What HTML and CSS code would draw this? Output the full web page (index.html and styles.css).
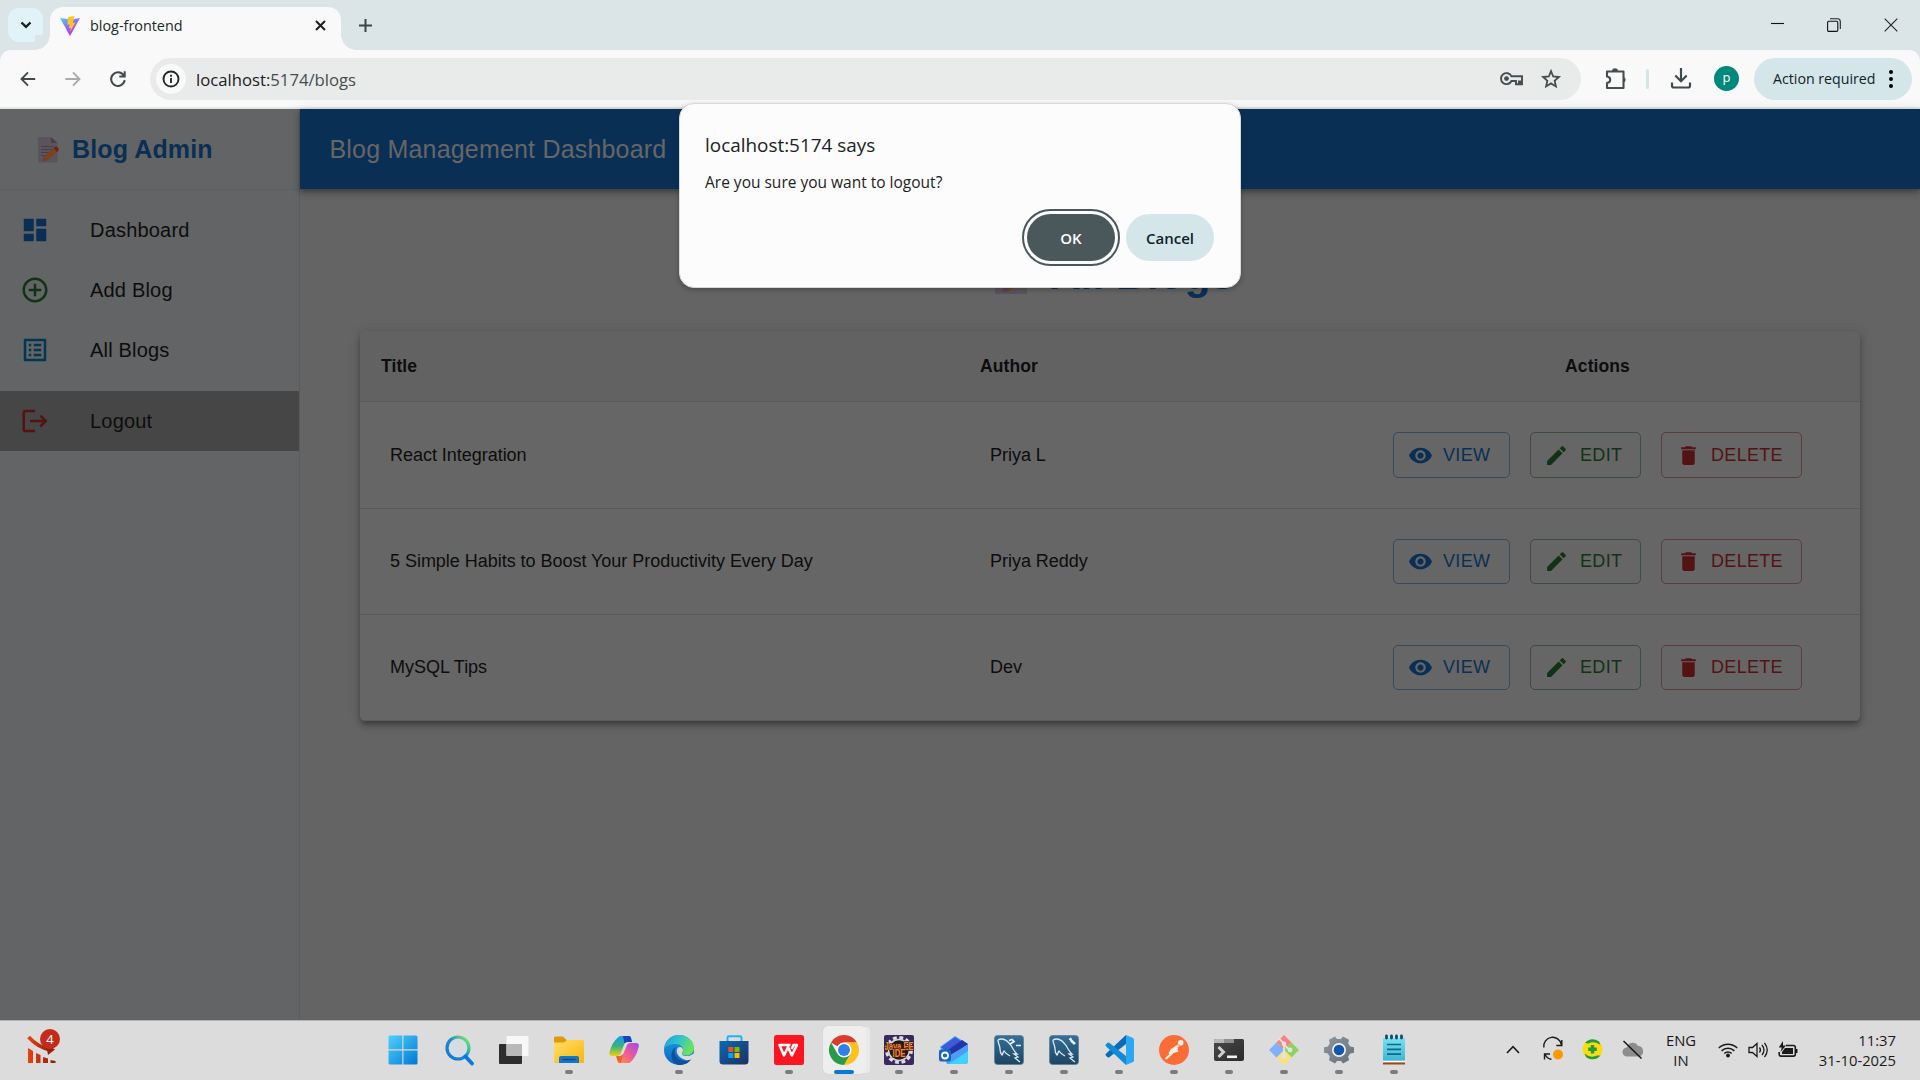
FILE: index.html
```html
<!DOCTYPE html>
<html lang="en">
<head>
<meta charset="utf-8">
<title>blog-frontend</title>
<link rel="stylesheet" href="styles.css">
</head>
<body>
<svg class="defs" width="0" height="0">
  <defs>
    <linearGradient id="gWin" x1="0" y1="0" x2="1" y2="1"><stop offset="0" stop-color="#4fd0fd"/><stop offset="1" stop-color="#0078d4"/></linearGradient>
    <linearGradient id="gSearch" x1="1" y1="0" x2="0" y2="1"><stop offset=".1" stop-color="#6be36a"/><stop offset=".5" stop-color="#1b87d6"/><stop offset="1" stop-color="#0a78d8"/></linearGradient>
    <linearGradient id="gFolder" x1="0" y1="0" x2="1" y2="1"><stop offset="0" stop-color="#ffe06a"/><stop offset="1" stop-color="#fbb40c"/></linearGradient>
    <linearGradient id="gCopA" x1="0" y1="0" x2="0" y2="1"><stop offset="0" stop-color="#1a9bee"/><stop offset=".5" stop-color="#35b27e"/><stop offset="1" stop-color="#ecd010"/></linearGradient>
    <linearGradient id="gCopB" x1="1" y1="0" x2="0" y2="1"><stop offset="0" stop-color="#9a4df0"/><stop offset=".5" stop-color="#f0589a"/><stop offset="1" stop-color="#ff9a3c"/></linearGradient>
    <linearGradient id="gEdgeA" x1="0" y1="0" x2="1" y2=".4"><stop offset="0" stop-color="#1b9de2"/><stop offset=".5" stop-color="#2fc3cf"/><stop offset="1" stop-color="#6be35a"/></linearGradient>
    <linearGradient id="gEdgeB" x1="0" y1="0" x2="0" y2="1"><stop offset="0" stop-color="#1ba0e6"/><stop offset="1" stop-color="#0b66c0"/></linearGradient>
    <linearGradient id="gStore" x1="0" y1="0" x2="1" y2="1"><stop offset="0" stop-color="#0a6ab6"/><stop offset="1" stop-color="#1e2e5e"/></linearGradient>
    <linearGradient id="gSql" x1="0" y1="0" x2="0" y2="1"><stop offset="0" stop-color="#33709a"/><stop offset="1" stop-color="#1d4562"/></linearGradient>
    <linearGradient id="gVite" x1="0" y1="0" x2=".6" y2="1"><stop offset="0" stop-color="#41d1ff"/><stop offset=".7" stop-color="#a04dfd"/><stop offset="1" stop-color="#bd34fe"/></linearGradient>
    <linearGradient id="gNote" x1="0" y1="0" x2="0" y2="1"><stop offset="0" stop-color="#7be0f0"/><stop offset="1" stop-color="#3fb6d6"/></linearGradient>
    <linearGradient id="gGear" x1="0" y1="0" x2="1" y2="1"><stop offset="0" stop-color="#8e979f"/><stop offset="1" stop-color="#66707a"/></linearGradient>
    <linearGradient id="gTerm" x1="0" y1="0" x2="1" y2="1"><stop offset="0" stop-color="#4a4a4a"/><stop offset="1" stop-color="#2a2a2a"/></linearGradient>
    <linearGradient id="gStock" x1="0" y1="0" x2="1" y2="0"><stop offset="0" stop-color="#e8420c"/><stop offset="1" stop-color="#8f1d0c"/></linearGradient>
    <symbol id="memo" viewBox="0 0 22 26">
      <path d="M0 0h13l6.500 6v19.500H0z" fill="#5b545e"/><path d="M13 0v6h6.500z" fill="#474049"/>
      <path d="M3 9.500h12M3 12.500h12M3 15.500h9M3 18.500h6" stroke="#443d4b" stroke-width="1"/>
      <path d="M5.500 19.500 15.500 11l3.500 4-10 8.500-4.500 1z" fill="#7a4319"/><path d="M5.500 19.500l3.500 4-4.500 1z" fill="#5a4550"/>
      <path d="M15.500 11l1.300-1.200q1.800-.8 3.200 1 1.400 1.600.3 3L19 15z" fill="#6a2419"/>
    </symbol>
    <symbol id="eye" viewBox="0 0 24 24"><path d="M12 4.500C7 4.500 2.730 7.610 1 12c1.730 4.390 6 7.500 11 7.500s9.270-3.110 11-7.500c-1.730-4.390-6-7.500-11-7.500zM12 17c-2.760 0-5-2.240-5-5s2.240-5 5-5 5 2.240 5 5-2.240 5-5 5zm0-8c-1.660 0-3 1.340-3 3s1.340 3 3 3 3-1.340 3-3-1.340-3-3-3z"/></symbol>
    <symbol id="pencil" viewBox="0 0 24 24"><path d="M3 17.250V21h3.750L17.810 9.940l-3.750-3.750L3 17.250zM20.710 7.040c.39-.39.39-1.020 0-1.410l-2.340-2.340a.996.996 0 0 0-1.410 0l-1.830 1.830 3.750 3.750 1.830-1.830z"/></symbol>
    <symbol id="bin" viewBox="0 0 24 24"><path d="M6 19c0 1.100.9 2 2 2h8c1.100 0 2-.9 2-2V7H6v12zM19 4h-3.500l-1-1h-5l-1 1H5v2h14V4z"/></symbol>
    <symbol id="dolphin" viewBox="0 0 30 30"><path d="M4 5c3-2 8-1 11 3 4 4 4 8 8 11l-3 0 4 3-3 1 5 4M4 5c0 4 2 5 2 9 0 3 1 5 2 6 1-1 1-3 2-4 2 3 4 4 6 5" fill="none" stroke="#dce9f2" stroke-width="1.300"/></symbol>
  </defs>
</svg>

<div class="screen">
  <header class="tabstrip">
    <div class="tab-search"><svg width="12" height="8" viewBox="0 0 12 8"><path d="M1.500 1.500 6 5.800l4.500-4.300" fill="none" stroke="#1b2021" stroke-width="2.400"/></svg></div>
    <div class="tab">
      <svg width="20" height="20" viewBox="0 0 20 20"><path d="M0 2l10 18L20 2l-9 1.600z" fill="url(#gVite)"/><path d="M14.500 0 8 1.300l-.8 7.400 2.400-.4-.8 4 2-.6-.8 4.300 5.500-9.500-2.600.5z" fill="#ffc41f"/></svg>
      <span class="tab-title">blog-frontend</span>
      <svg width="11" height="11" viewBox="0 0 11 11"><path d="M1 1l9 9M10 1l-9 9" stroke="#1b1f20" stroke-width="2"/></svg>
    </div>
    <svg class="new-tab" width="13" height="13" viewBox="0 0 13 13"><path d="M6.500 0v13M0 6.500h13" stroke="#3a4547" stroke-width="2"/></svg>
    <div class="window-controls">
      <svg width="14" height="14" viewBox="0 0 14 14"><path d="M1 5.500h13" stroke="#111" stroke-width="1.100"/></svg>
      <svg width="14" height="14" viewBox="0 0 14 14"><rect x=".6" y="3.200" width="10.200" height="10.200" rx="1.200" fill="none" stroke="#111" stroke-width="1.100"/><path d="M3 .8h7.500q2.800 0 2.800 2.800V11" fill="none" stroke="#222" stroke-width="1.100"/></svg>
      <svg width="14" height="14" viewBox="0 0 14 14"><path d="M.7.700l12.600 12.600M13.300.7.700 13.300" stroke="#222" stroke-width="1.100"/></svg>
    </div>
  </header>

  <div class="toolbar-back">
  <nav class="toolbar">
    <div class="nav-buttons">
      <svg width="16" height="16" viewBox="0 0 16 16"><path d="M15.200 8H2M8 1.400 1.500 8 8 14.600" fill="none" stroke="#3f4a4c" stroke-width="1.900"/></svg>
      <svg width="16" height="16" viewBox="0 0 16 16"><path d="M.3 8H14M8 1.400 14.500 8 8 14.600" fill="none" stroke="#a8acad" stroke-width="1.900"/></svg>
      <svg width="16" height="16" viewBox="0 0 16 16"><path d="M13.600 4.300A6.800 6.800 0 1 0 14.700 9.200M14.700.3v5.200H9.300" fill="none" stroke="#3f4a4c" stroke-width="2"/></svg>
    </div>
    <div class="omnibox">
      <div class="site-info"><svg width="18" height="18" viewBox="0 0 18 18"><circle cx="9" cy="9" r="7.500" fill="none" stroke="#232829" stroke-width="1.900"/><path d="M9 8v5M9 4.800v1.900" stroke="#232829" stroke-width="1.900"/></svg></div>
      <div class="url"><b>localhost:</b>5174/blogs</div>
      <svg class="key" width="23" height="14" viewBox="0 0 23 14"><path d="M11.500 4.300A5.500 5.500 0 1 0 11.500 9H16v3.300h3V9.500h1.500v2.800H22V4.300z" fill="none" stroke="#454e50" stroke-width="1.900"/><circle cx="6.500" cy="6.600" r="2.400" fill="#454e50"/></svg>
      <svg class="star" width="20" height="20" viewBox="0 0 20 20"><path d="M10 2.200l2.200 5.300 5.700.5-4.300 3.800 1.300 5.600-4.900-3-4.900 3 1.300-5.600L2.100 8l5.700-.5z" fill="none" stroke="#454e50" stroke-width="1.800"/></svg>
    </div>
    <svg class="puzzle" width="22" height="22" viewBox="0 0 22 22"><path d="M2 3.500h16.500v16.500H2v-5q3.200-.5 3.200-3.300T2 8.500z" fill="none" stroke="#454e50" stroke-width="2.100" stroke-linejoin="round"/><path d="M7 3.300a3 3 0 0 1 6 0zM18.700 9a3 3 0 0 1 0 5.600z" fill="#454e50"/></svg>
    <div class="separator"></div>
    <svg class="download" width="20" height="21" viewBox="0 0 20 21"><path d="M10 0v12.500M4.300 7.500l5.700 5.700 5.700-5.700M1 14.500v3.300q0 1.700 1.700 1.700h14.600q1.700 0 1.700-1.700v-3.300" fill="none" stroke="#3f4a4c" stroke-width="2.200"/></svg>
    <div class="avatar">p</div>
    <div class="action-pill"><span>Action required</span><svg width="4" height="18" viewBox="0 0 4 18"><circle cx="2" cy="2" r="2"/><circle cx="2" cy="9" r="2"/><circle cx="2" cy="16" r="2"/></svg></div>
  </nav>
  </div>

  <div class="page">
    <aside class="sidebar">
      <div class="brand"><svg width="22" height="26"><use href="#memo"/></svg><span>Blog Admin</span></div>
      <ul class="menu">
        <li><svg class="blue" width="30" height="30" viewBox="0 0 24 24"><path d="M3 13h8V3H3v10zm0 8h8v-6H3v6zm10 0h8V11h-8v10zm0-18v6h8V3h-8z"/></svg>Dashboard</li>
        <li><svg class="green" width="30" height="30" viewBox="0 0 24 24"><path d="M13 7h-2v4H7v2h4v4h2v-4h4v-2h-4V7zm-1-5C6.480 2 2 6.480 2 12s4.480 10 10 10 10-4.480 10-10S17.520 2 12 2zm0 18c-4.410 0-8-3.590-8-8s3.590-8 8-8 8 3.590 8 8-3.590 8-8 8z"/></svg>Add Blog</li>
        <li><svg class="info" width="30" height="30" viewBox="0 0 24 24"><path d="M19 5v14H5V5h14m1.100-2H3.900c-.5 0-.9.4-.9.9v16.200c0 .4.4.9.9.9h16.200c.4 0 .9-.5.9-.9V3.900c0-.5-.5-.9-.9-.9zM11 7h6v2h-6V7zm0 4h6v2h-6v-2zm0 4h6v2h-6zM7 7h2v2H7zm0 4h2v2H7zm0 4h2v2H7z"/></svg>All Blogs</li>
        <li class="logout"><svg class="red" width="30" height="30" viewBox="0 0 24 24"><path d="m17 7-1.410 1.410L18.170 11H8v2h10.170l-2.580 2.580L17 17l5-5zM4 5h8V3H4c-1.100 0-2 .9-2 2v14c0 1.100.9 2 2 2h8v-2H4V5z"/></svg>Logout</li>
      </ul>
    </aside>
    <main class="main">
      <div class="appbar">Blog Management Dashboard</div>
      <div class="content">
        <h1 class="heading"><svg width="36" height="43"><use href="#memo"/></svg><span>All Blogs</span></h1>
        <div class="paper">
          <div class="thead"><span>Title</span><span>Author</span><span>Actions</span></div>
          <div class="trow first"><span>React Integration</span><span>Priya L</span>
            <div class="actions"><div class="btn view"><svg><use href="#eye"/></svg>VIEW</div><div class="btn edit"><svg><use href="#pencil"/></svg>EDIT</div><div class="btn delete"><svg><use href="#bin"/></svg>DELETE</div></div></div>
          <div class="trow"><span>5 Simple Habits to Boost Your Productivity Every Day</span><span>Priya Reddy</span>
            <div class="actions"><div class="btn view"><svg><use href="#eye"/></svg>VIEW</div><div class="btn edit"><svg><use href="#pencil"/></svg>EDIT</div><div class="btn delete"><svg><use href="#bin"/></svg>DELETE</div></div></div>
          <div class="trow"><span>MySQL Tips</span><span>Dev</span>
            <div class="actions"><div class="btn view"><svg><use href="#eye"/></svg>VIEW</div><div class="btn edit"><svg><use href="#pencil"/></svg>EDIT</div><div class="btn delete"><svg><use href="#bin"/></svg>DELETE</div></div></div>
        </div>
      </div>
    </main>
  </div>

  <footer class="taskbar">
    <div class="widgets">
      <svg width="30" height="30" viewBox="0 0 30 30"><path d="M1.500 3q9 10 22 13" fill="none" stroke="url(#gStock)" stroke-width="3.600"/><path d="M19 10l9 5.500-7 5.500z" fill="#9a200c"/><path d="M1 14l5 3v12H1zM9 19l4.500 2v8H9zM16 23l5 1.500V29h-5zM23.500 26l5 1v2h-5z" fill="url(#gStock)"/></svg>
      <span class="badge">4</span>
    </div>
    <div class="apps">
      <div class="app start"><svg viewBox="0 0 30 30"><path d="M.5 2q0-1.500 1.500-1.500h12.300v13.800H.500zM15.400.500h12.600q1.500 0 1.500 1.500v12.300H15.400zM.5 15.400h13.800v14H2q-1.500 0-1.500-1.500zM15.400 15.400h14.100v12.500q0 1.500-1.500 1.500H15.400z" fill="url(#gWin)"/></svg></div>
      <div class="app"><svg viewBox="0 0 30 30"><circle cx="14" cy="13" r="11" fill="#d5dde3" stroke="url(#gSearch)" stroke-width="3.200"/><path d="M21.500 21.500l6.500 7" stroke="#0a78d8" stroke-width="3.800" stroke-linecap="round"/></svg></div>
      <div class="app"><svg viewBox="0 0 30 30"><rect x="0" y="9" width="23" height="20" rx="1" fill="#2d2d2d"/><rect x="7.500" y="1" width="22" height="20" rx="1" fill="#f8f8f8"/><rect x="7.500" y="9" width="15.500" height="12" fill="#b9b9b9"/></svg></div>
      <div class="app run"><svg viewBox="0 0 30 30"><path d="M0 3q0-1.500 1.500-1.500H9L12.500 5H27v6H0z" fill="#dd9a0a"/><path d="M0 7.500h10L13 5h15.500q1.500 0 1.500 1.500V28H0z" fill="url(#gFolder)"/><path d="M5 28v-5q0-2 2-2h16q2 0 2 2v5z" fill="#1376c8"/><path d="M8.500 24.500h13" stroke="#0a4a80" stroke-width="1.300"/></svg></div>
      <div class="app"><svg viewBox="0 0 30 30"><path d="M9 2.500Q9.500 1 12 1h8q1.500 0 2 2l1 4h-5q-2 0-2.700 2l-3.800 10q-.8 2-3 2H3q-3 0-2.500-3.500Q3 7 9 2.500z" fill="url(#gCopA)"/><path d="M14 1h6q1.500 0 2 2l1 4h-5q-1.500 0-2.500 1.500z" fill="#1642c4"/><path d="M21 27.500Q20.500 28 18 28h-7q-2 0-2.500-2L7.300 21.500H11q2.500 0 3.200-2.500L18 10q.8-2 3-2h6q3.400 0 2.800 3.500Q27 23 21 27.500z" fill="url(#gCopB)"/><path d="M7.300 21h4l2.700-2-2 8.800h-1q-2 0-2.500-2z" fill="#f4602c"/></svg></div>
      <div class="app run"><svg viewBox="0 0 30 30"><circle cx="15" cy="15" r="15" fill="url(#gEdgeB)"/><path d="M0 14C1 5 7 0 15 0c9 0 15 6 15 13 0 5-4 7.500-8 7.500-3 0-4.500-1.500-3.500-3 2-4-1-8.500-6.500-8.500C6 9 1.500 11 0 14z" fill="url(#gEdgeA)"/><path d="M12 12c-4 6 1 14 9 14 3 0 5-1 6.500-2-3 4.500-7.500 6-12.500 6C6 28 5 16 12 12z" fill="#0f4f9c"/><path d="M14 12.500q3.500-1.500 4.800 1.500.7 2-.6 4c-.7 1.500.6 3 4.300 3q4 0 7-2.500l.3.600q-.5 3-1.500 4.400-2 2-6 1.700C14.500 23 10.500 17 14 12.500z" fill="#dcdcdc"/></svg></div>
      <div class="app"><svg viewBox="0 0 30 30"><path d="M8.500 7V2.500Q8.500 1.300 10 1.300h11q1.500 0 1.500 1.200V7" fill="none" stroke="#1db4f2" stroke-width="2"/><path d="M.5 6h29v20q0 3.500-3.500 3.500H4Q.5 29.500.5 26z" fill="url(#gStore)"/><path d="M9.300 12h5v5h-5z" fill="#f25022"/><path d="M15.500 12h5v5h-5z" fill="#7fba00"/><path d="M9.300 18h5v5h-5z" fill="#00a4ef"/><path d="M15.500 18h5v5h-5z" fill="#ffb900"/></svg></div>
      <div class="app run"><svg viewBox="0 0 30 30"><rect width="30" height="30" rx="2.500" fill="#fb1521"/><path d="M16.500 10H5.500l4.500 10.500L14 12l3.800 8.500L23 10h-3.500l-1.800 4" fill="none" stroke="#fff" stroke-width="2.500" stroke-linejoin="round"/></svg></div>
      <div class="app run active"><svg viewBox="0 0 30 30"><path d="M15 15 2 7.500A15 15 0 0 1 28 7.500H15z" fill="#db3a2c"/><path d="M15 15V7.500h13A15 15 0 0 1 15 30l6.500-11z" fill="#fcc31e"/><path d="M15 15l6.500 3.700L15 30A15 15 0 0 1 2 7.500l6.500 11.200z" fill="#2a9a48"/><circle cx="15" cy="15" r="7.500" fill="#fff"/><circle cx="15" cy="15" r="6" fill="#2f80ea"/></svg></div>
      <div class="app run"><svg viewBox="0 0 30 30"><rect width="30" height="30" rx="2" fill="#3b2860"/><circle cx="15" cy="15" r="12.500" fill="none" stroke="#dedede" stroke-width="3" stroke-dasharray="3.900 2.640"/><circle cx="15" cy="15" r="10.500" fill="#1e1a20" stroke="#d4d4d4" stroke-width="1.600"/><text x="15" y="14.500" class="jee" textLength="29" lengthAdjust="spacingAndGlyphs">Java EE</text><text x="15" y="22.300" class="jee" textLength="13" lengthAdjust="spacingAndGlyphs">IDE</text></svg></div>
      <div class="app run"><svg viewBox="0 0 30 30"><path d="M1 12 16 1l13 8v17q0 3-3 3H8z" fill="#36b3f4"/><path d="M2 12 16 2l6 4-15 11z" fill="#3e5ad8"/><path d="M6 17 23 5l6 4-18 12z" fill="#2434a8"/><path d="M11 20 29 10v8L14 28z" fill="#4f9bf8"/><path d="M10 29l19-13v10q0 3-3 3z" fill="#3fd2fa"/><rect y="14.500" width="12" height="12" rx="2" fill="#1566c8"/><circle cx="6" cy="20.500" r="3" fill="none" stroke="#fff" stroke-width="1.800"/></svg></div>
      <div class="app run"><svg viewBox="0 0 30 30"><rect x=".5" y=".5" width="29" height="29" rx="3" fill="url(#gSql)" stroke="#5c7f97" stroke-width=".8"/><use href="#dolphin"/><path d="M15 5.500l3-1 2 2-4 2.500M22 10.500h5" stroke="#eef4f8" stroke-width="1.700" fill="none"/></svg></div>
      <div class="app run"><svg viewBox="0 0 30 30"><rect x=".5" y=".5" width="29" height="29" rx="3" fill="url(#gSql)" stroke="#5c7f97" stroke-width=".8"/><use href="#dolphin"/><path d="M20.500 3.500l2 1.500M22 5.500l4 3.500" stroke="#eef4f8" stroke-width="2.600" fill="none"/></svg></div>
      <div class="app run"><svg viewBox="0 0 30 30"><path d="M22 0 2.200 18.500q-1.600 1.300 0 2.600l1.400 1.100q.8.500 1.700 0L22 9z" fill="#0a6cb8"/><path d="M22 30 2.200 11.500q-1.600-1.300 0-2.600l1.400-1.100q.8-.5 1.700 0L22 21z" fill="#118bd8"/><path d="M22 0l7 3q1 .5 1 1.500v21q0 1-1 1.500l-7 3z" fill="#2aa8f6"/></svg></div>
      <div class="app run"><svg viewBox="0 0 30 30"><circle cx="15" cy="15" r="15" fill="#fb6c37"/><circle cx="21.700" cy="7.800" r="2.800" fill="#fdeee6"/><path d="M19.500 10.500 12.500 15l-2 4M18.500 12.500l-8 8-4 3.500M14 17l5-1.500" stroke="#fdeee6" stroke-width="2.200" fill="none"/></svg></div>
      <div class="app run"><svg viewBox="0 0 30 30"><path d="M0 5.500Q0 4 1.500 4h27Q30 4 30 5.500V24q0 2-2 2H2q-2 0-2-2z" fill="url(#gTerm)"/><path d="M0 8V5.500Q0 4 1.500 4H10v4z" fill="#b8b8b8"/><path d="M10 4h10v4H10z" fill="#8f8f8f"/><path d="M4.500 12l5 5-5 5" fill="none" stroke="#d0d0d0" stroke-width="3"/><path d="M13 21.800h10" stroke="#f2f2f2" stroke-width="2.600"/></svg></div>
      <div class="app run"><svg viewBox="0 0 30 30"><path d="M15 0l7.500 7.500L15 15 7.500 7.500z" fill="#fb7f7f"/><path d="M22.500 7.500 30 15l-7.500 7.500L15 15z" fill="#8bd55f"/><path d="M15 15l7.500 7.500L15 30l-7.500-7.500z" fill="#fde07c"/><path d="M7.500 7.500 15 15l-7.500 7.500L0 15z" fill="#7fb0fb"/><path d="M10 3.500l5 5v14M15 9.500l6 6" stroke="#e2e4e2" stroke-width="1.800" fill="none"/><circle cx="15" cy="9" r="2.400" fill="#e2e4e2"/><circle cx="15" cy="21.500" r="2.400" fill="#e2e4e2"/><circle cx="21" cy="15" r="2.400" fill="#e2e4e2"/></svg></div>
      <div class="app run"><svg viewBox="0 0 30 30"><path d="M11 1.500l2 2.500h4l2-2.500 6 3.300-.8 3.700 2 3 3.800.8v5.400l-3.800.8-2 3 .8 3.700-6 3.300-2-2.500h-4l-2 2.500-6-3.300.8-3.700-2-3L0 17.700v-5.400l3.800-.8 2-3L5 4.800z" fill="url(#gGear)"/><circle cx="15" cy="15" r="7" fill="#f0f2f4"/><circle cx="15" cy="15" r="5.300" fill="#0f58ac"/></svg></div>
      <div class="app run"><svg viewBox="0 0 30 30"><path d="M4 3h22v23H4z" fill="url(#gNote)"/><path d="M4 26.300h22" stroke="#fff" stroke-width="1.200"/><path d="M4 28.500h22" stroke="#9c4a0c" stroke-width="2"/><path d="M8 9.500h14M8 14.300h14M8 19.200h14" stroke="#0a6a8c" stroke-width="1.700"/><path d="M7.500 1v2M12.500 1v2M17.500 1v2M22.500 1v2" stroke="#0a4f6c" stroke-width="2.800" stroke-linecap="round"/></svg></div>
    </div>
    <div class="tray">
      <svg width="14" height="9" viewBox="0 0 14 9"><path d="M1 8l6-6.300L13 8" fill="none" stroke="#1a1a1a" stroke-width="1.600"/></svg>
      <svg class="sync" width="20" height="21" viewBox="0 0 20 21"><path d="M.8 8.500A8.800 8.800 0 0 1 18.500 6M18.800 1v5.500h-5.500M1.500 20.500V15H7M2 15.500q2.500 4.500 6.500 4.700" fill="none" stroke="#1a1a1a" stroke-width="1.400"/><circle cx="15" cy="15.500" r="5" fill="#fe9800"/></svg>
      <svg width="21" height="21" viewBox="0 0 21 21"><circle cx="10.500" cy="10.500" r="10" fill="#fbdc14"/><path d="M3 4q6-6.500 14-1.500l1.500 3.500q-6-4.500-12-1.500z" fill="#269a38"/><path d="M18.500 16.500q-6 6.500-14 2l-2-4q6 5 12.500 2z" fill="#269a38"/><path d="M10.500 6v8.500M6.200 10.300h8.600" stroke="#269a38" stroke-width="3.400"/></svg>
      <svg width="22" height="20" viewBox="0 0 22 20"><path d="M5 16.500a4.500 4.500 0 0 1 0-9 6 6 0 0 1 11-1.800 5.500 5.500 0 0 1 1 10.800z" fill="#8d8d8d"/><path d="M1.500 1l18 17.500" stroke="#1a1a1a" stroke-width="1.600"/></svg>
      <div class="lang"><span>ENG</span><span>IN</span></div>
      <svg width="20" height="16" viewBox="0 0 20 16"><path d="M.8 6a13 13 0 0 1 18.400 0M3.600 8.900a9 9 0 0 1 12.800 0M6.300 11.500a5.300 5.300 0 0 1 7.400 0" fill="none" stroke="#1a1a1a" stroke-width="1.500"/><circle cx="10" cy="13.500" r="1.900" fill="#1a1a1a"/></svg>
      <svg width="20" height="16" viewBox="0 0 20 16"><path d="M1 5.500h3.500L9 1.500v13l-4.500-4H1zM11.500 5.500q2 2.500 0 5M14 3q4 5 0 10M16.500.8q5.500 7.200 0 14.400" fill="none" stroke="#1a1a1a" stroke-width="1.300"/></svg>
      <svg width="20" height="17" viewBox="0 0 20 17"><path d="M8 4.500h7.500q1.800 0 1.800 1.800v7q0 1.800-1.800 1.800H3q-1.800 0-1.800-1.800V11M18.700 8v4" fill="none" stroke="#1a1a1a" stroke-width="1.600"/><path d="M7 7h8v6H4l0-2z" fill="#1a1a1a"/><path d="M5 0 .8 6.500h3L2.500 11 8 4.500H5z" fill="#1a1a1a"/></svg>
      <div class="clock"><span>11:37</span><span>31-10-2025</span></div>
    </div>
  </footer>

  <div class="dialog">
    <div class="dialog-title">localhost:5174 says</div>
    <div class="dialog-text">Are you sure you want to logout?</div>
    <div class="dialog-buttons"><div class="ok">OK</div><div class="cancel">Cancel</div></div>
  </div>
</div>
</body>
</html>
```
FILE: styles.css
```css
* { box-sizing: border-box; }
body { margin: 0; overflow: hidden; font-family: "Open Sans", "Noto Sans", sans-serif; }
svg { display: block; flex: none; overflow: visible; }
.defs { position: absolute; }
.screen { position: relative; width: 1920px; height: 1080px; display: flex; flex-direction: column; }

/* Browser chrome */
.tabstrip { height: 50px; flex: none; display: flex; background: #dbe4e6; padding-left: 8px; }
.tab-search { width: 35px; height: 34px; margin-top: 8px; border-radius: 11px; background: #e1f3f8; display: grid; place-items: center; }
.tab { position: relative; width: 291px; height: 43px; margin: 7px 0 0 7px; border-radius: 13px 13px 0 0; background: #f9f9f9; display: flex; align-items: center; padding: 0 15px 6px 10px; }
.tab::before, .tab::after { content: ""; position: absolute; bottom: 0; width: 15px; height: 15px; }
.tab::before { left: -15px; background: radial-gradient(circle at 0 0, #dbe4e6 14.500px, #f9f9f9 15px); }
.tab::after { right: -15px; background: radial-gradient(circle at 100% 0, #dbe4e6 14.500px, #f9f9f9 15px); }
.tab-title { flex: 1; margin-left: 10px; font-size: 14.400px; color: #20282a; }
.new-tab { margin: 19px 0 0 18px; }
.window-controls { margin: 18px 22px 0 auto; display: flex; gap: 43px; }
.toolbar-back { background: #dbe4e6; flex: none; }
.toolbar { height: 59px; border-radius: 11px 11px 0 0; background: #f9f9f9; border-bottom: 2px solid #e3e7e7; display: flex; align-items: center; padding-left: 20px; }
.nav-buttons { display: flex; gap: 29px; width: 130px; }
.omnibox { width: 1431px; height: 42px; border-radius: 21px; background: #e8ebea; display: flex; align-items: center; padding: 0 20px 0 6px; }
.site-info { width: 30px; height: 30px; border-radius: 50%; background: #f9f9f9; display: grid; place-items: center; }
.url { flex: 1; margin-left: 10px; padding-top: 1px; font-size: 16.700px; color: #474d4e; }
.url b { font-weight: 400; color: #1c2122; }
.star { margin-left: 18px; }
.puzzle { margin-left: 24px; }
.separator { width: 3px; height: 20px; border-radius: 2px; background: #d3e5e9; margin-left: 19px; }
.download { margin-left: 22px; }
.avatar { width: 25px; height: 25px; border-radius: 50%; background: #00897b; color: #fff; font-size: 13px; line-height: 22px; text-align: center; margin-left: 23px; }
.action-pill { width: 158px; height: 42px; border-radius: 21px; background: #d4e6ea; margin-left: 15px; display: flex; align-items: center; justify-content: space-between; padding: 0 19px; font-size: 14.200px; color: #0f2226; white-space: nowrap; }

/* Page, dimmed behind the dialog */
.page { flex: 1; display: grid; grid-template-columns: 300px 1fr; font-family: "Liberation Sans", Arial, sans-serif; color: #0d0d0d; }
.sidebar { background: #636465; border-right: 1px solid #5a5b5c; }
.brand { height: 81px; border-bottom: 1px solid #5e5f60; display: flex; align-items: center; gap: 12px; padding: 1px 0 0 38px; font-size: 25px; font-weight: 700; letter-spacing: .13px; color: #0a2f54; }
.menu { list-style: none; margin: 0; padding: 10px 0 0; }
.menu li { height: 60px; display: flex; align-items: center; gap: 40px; padding-left: 20px; font-size: 20px; letter-spacing: .19px; }
.menu .logout { margin-top: 11px; background: #464646; }
.blue { fill: #0a2f54; }
.green { fill: #123214; }
.info { fill: #013654; }
.red { fill: #541313; }
.main { background: #646464; }
.appbar { height: 80px; padding-left: 29.500px; line-height: 81px; font-size: 25px; letter-spacing: .19px; color: #666; background: #0a2f54; box-shadow: 0 2px 5px rgba(0,0,0,.25), 0 5px 6px rgba(0,0,0,.12), 0 1px 12px rgba(0,0,0,.1); }
.content { padding: 59px 60px 0; }
.heading { margin: 0 0 30px; height: 53px; display: flex; justify-content: center; align-items: center; gap: 19px; padding-left: 9px; font-size: 42.500px; font-weight: 700; color: #0a2f54; }
.heading svg { margin-bottom: 2px; }
.paper { height: 390px; border-radius: 5px; background: #666; overflow: hidden; box-shadow: 0 4px 5px -1px rgba(0,0,0,.24), 0 5px 7px rgba(0,0,0,.14), 0 1px 13px rgba(0,0,0,.12); font-size: 18px; letter-spacing: -.03px; }
.thead, .trow { display: grid; align-items: center; border-bottom: 1px solid #5a5a5a; }
.thead { height: 71px; background: #626262; font-size: 17.500px; font-weight: 700; letter-spacing: .1px; padding-left: 21px; grid-template-columns: 599px 355px 1fr; }
.thead span:last-child { text-align: center; }
.trow { height: 106px; padding-left: 30px; grid-template-columns: 600px 403px 1fr; }
.trow.first { height: 107px; }
.actions { display: flex; gap: 20px; }
.btn { height: 45px; border: 1px solid; border-radius: 5px; display: flex; align-items: center; gap: 10px; padding-left: 14px; font-size: 18px; letter-spacing: .32px; }
.first .btn { height: 46px; }
.btn svg { width: 25px; height: 25px; fill: currentColor; }
.view { width: 117px; color: #0a2f54; border-color: #384a5d; }
.edit { width: 111px; padding-left: 13px; gap: 11px; color: #123214; border-color: #3c4c3d; }
.delete { width: 141px; color: #541313; border-color: #5d3c3c; }

/* Taskbar */
.taskbar { height: 60px; flex: none; border-top: 1px solid #b4b4b4; background: #dcdcdc; display: flex; }
.widgets { position: relative; width: 376.500px; padding: 13px 0 0 27px; }
.badge { position: absolute; left: 40px; top: 8px; width: 20px; height: 20px; border-radius: 50%; background: #c42b1c; color: #fff; font-size: 13px; line-height: 20px; text-align: center; }
.apps { display: flex; padding-top: 5px; }
.app { width: 55px; height: 48px; display: flex; flex-direction: column; align-items: center; padding-top: 9px; border-radius: 5px; }
.app svg { width: 30px; height: 30px; }
.start { padding-right: 3px; }
.run::after { content: ""; width: 8px; height: 4px; border-radius: 2px; background: #7c7c7c; margin-top: 5px; }
.active { width: 43px; margin: 0 6px; background: #eeeeee; box-shadow: 5px 0 0 -1px #e9e9e9, 0 0 1px #bbb; }
.active::after { width: 20px; background: #0a78d4; }
.jee { font: bold 10px "Liberation Sans", Arial, sans-serif; fill: #f38a32; stroke: #3a1a10; stroke-width: 1.500px; paint-order: stroke; text-anchor: middle; }
.tray { margin-left: auto; display: flex; align-items: center; padding: 0 24px 1px 0; font-size: 14.800px; line-height: 20px; color: #1a1a1a; }
.tray > svg { margin-bottom: 1px; }
.tray > svg:nth-child(2) { margin-left: 23px; }
.tray > svg:nth-child(3) { margin-left: 19px; }
.tray > svg:nth-child(4) { margin-left: 19px; }
.lang { width: 30px; margin: 0 22px 0 22px; display: flex; flex-direction: column; align-items: center; }
.tray .lang ~ svg { margin-right: 10px; }
.clock { width: 78px; margin-left: 10px; display: flex; flex-direction: column; align-items: flex-end; white-space: nowrap; }

/* Confirm dialog, floats over chrome and page */
.dialog { position: absolute; left: 679px; top: 103px; width: 562px; height: 185px; border: 1px solid #d5d9da; border-radius: 15px; background: #fcfcfc; padding: 27px 26px 0 25px; color: #1d2223; box-shadow: 0 2px 5px rgba(0,0,0,.25); }
.dialog-title { font-size: 18.900px; font-weight: 500; line-height: 28px; }
.dialog-text { font-size: 15.500px; line-height: 22px; margin-top: 12px; }
.dialog-buttons { display: flex; justify-content: flex-end; gap: 11px; margin-top: 21px; }
.ok, .cancel { width: 88px; height: 47px; border-radius: 23.500px; font-size: 15px; font-weight: 600; line-height: 49px; text-align: center; }
.ok { background: #4b585b; color: #fff; outline: 2px solid #4b585b; outline-offset: 3px; }
.cancel { background: #d4e6ea; color: #0f2226; }
```
